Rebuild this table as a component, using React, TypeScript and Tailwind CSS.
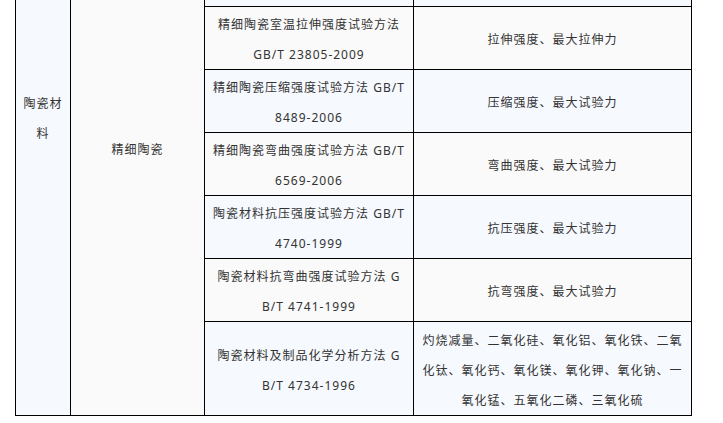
const blue = "bg-[#f6f9fe]";
const gray = "bg-[#fafafa]";

type Row = { h: string; bg: string; method: string[]; items: string[] };

const rows: Row[] = [
  { h: "h-[7px]", bg: blue, method: [], items: [] },
  { h: "h-[63px]", bg: gray, method: ["精细陶瓷室温拉伸强度试验方法", "GB/T 23805-2009"], items: ["拉伸强度、最大拉伸力"] },
  { h: "h-[63px]", bg: blue, method: ["精细陶瓷压缩强度试验方法 GB/T", "8489-2006"], items: ["压缩强度、最大试验力"] },
  { h: "h-[63px]", bg: gray, method: ["精细陶瓷弯曲强度试验方法 GB/T", "6569-2006"], items: ["弯曲强度、最大试验力"] },
  { h: "h-[63px]", bg: blue, method: ["陶瓷材料抗压强度试验方法 GB/T", "4740-1999"], items: ["抗压强度、最大试验力"] },
  { h: "h-[63px]", bg: gray, method: ["陶瓷材料抗弯曲强度试验方法 G", "B/T 4741-1999"], items: ["抗弯强度、最大试验力"] },
  {
    h: "flex-1",
    bg: blue,
    method: ["陶瓷材料及制品化学分析方法 G", "B/T 4734-1996"],
    items: ["灼烧减量、二氧化硅、氧化铝、氧化铁、二氧", "化钛、氧化钙、氧化镁、氧化钾、氧化钠、一", "氧化锰、五氧化二磷、三氧化硫"],
  },
];

function Lines({ lines }: { lines: string[] }) {
  return (
    <div className="translate-y-[2px] text-center">
      {lines.map((line) => (
        <div key={line} className="whitespace-nowrap">
          {line}
        </div>
      ))}
    </div>
  );
}

export default function App() {
  return (
    <div className="h-[423px] w-[723px] overflow-hidden bg-white font-[Noto_Sans,Noto_Sans_CJK_SC,sans-serif] text-[12px] leading-[30px] tracking-[1px] text-[#333]">
      <div className="ml-[15px] flex h-[416px] w-[677px] border-x border-b border-black">
        <div className={`w-[55px] shrink-0 border-r border-black pt-[87px] ${blue}`}>
          <Lines lines={["陶瓷材", "料"]} />
        </div>
        <div className={`w-[134px] shrink-0 border-r border-black pt-[133px] ${gray}`}>
          <Lines lines={["精细陶瓷"]} />
        </div>
        <div className="flex flex-1 flex-col">
          {rows.map((row, i) => (
            <div
              key={i}
              className={`flex ${row.h} ${row.bg} ${i < rows.length - 1 ? "border-b border-black" : ""}`}
            >
              <div className="flex w-[209px] shrink-0 items-center justify-center border-r border-black">
                <Lines lines={row.method} />
              </div>
              <div className="flex flex-1 items-center justify-center">
                <Lines lines={row.items} />
              </div>
            </div>
          ))}
        </div>
      </div>
    </div>
  );
}
